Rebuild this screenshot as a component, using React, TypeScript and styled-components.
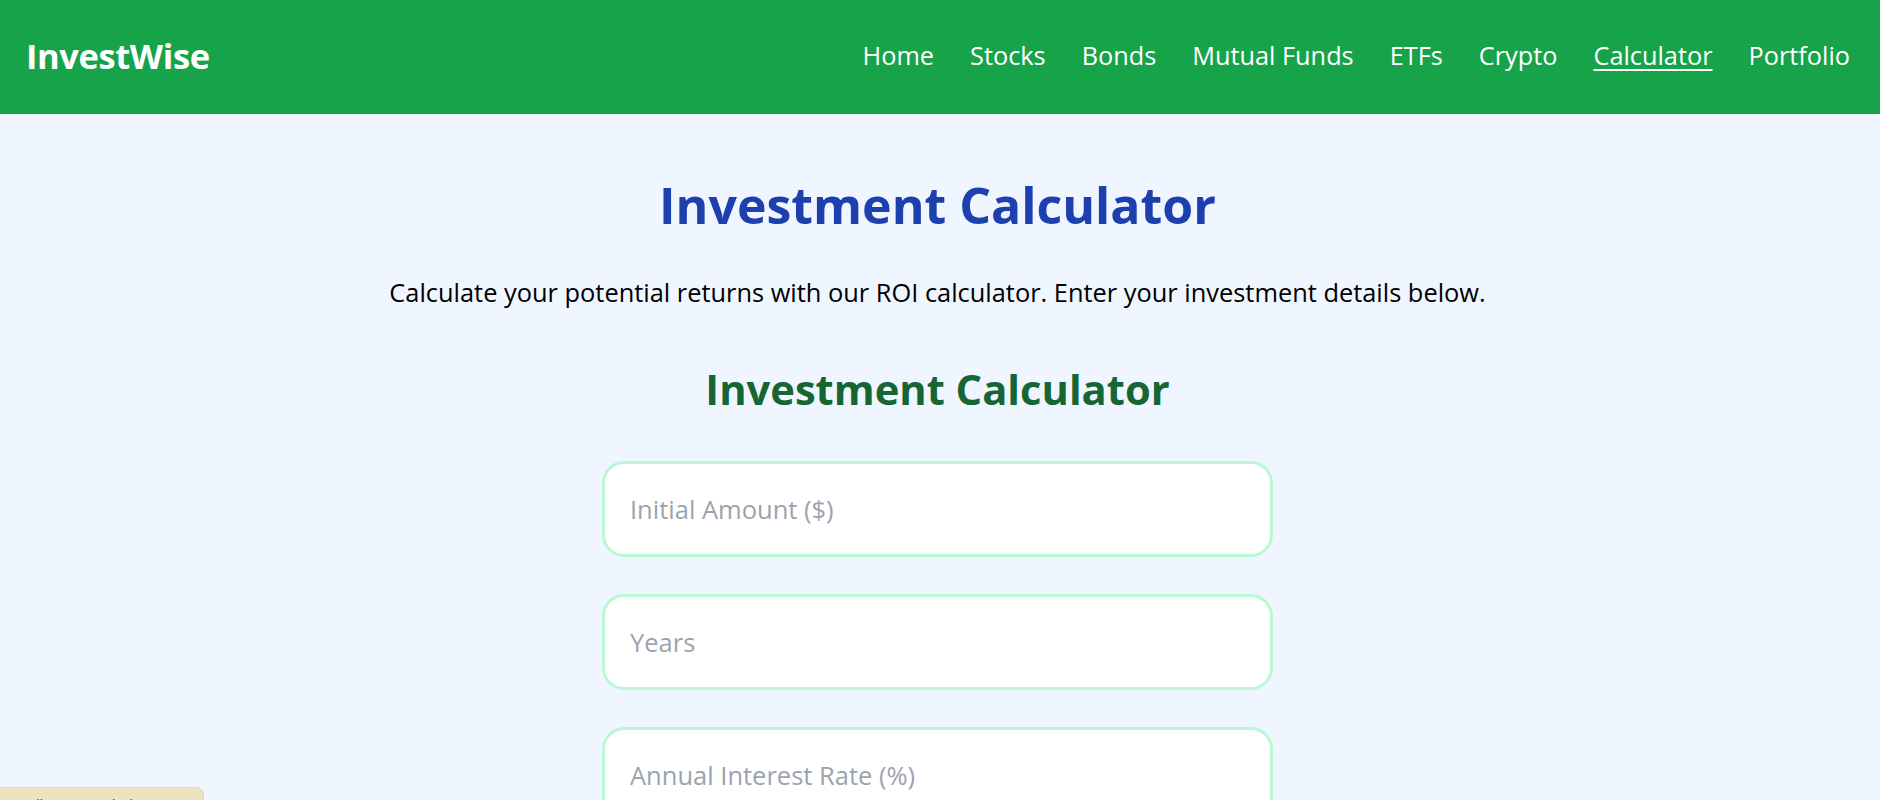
import React from "react";
import styled, { createGlobalStyle } from "styled-components";

const GlobalStyle = createGlobalStyle`
  html, body {
    margin: 0;
    padding: 0;
    overflow: hidden;
    background: #eff6ff;
    font-family: "Open Sans", "Noto Sans", "Liberation Sans", sans-serif;
  }
  * { box-sizing: border-box; }
`;

const Page = styled.div`
  min-height: 800px;
  background: #eff6ff;
`;

const Header = styled.header`
  height: 114px;
  background: #16a34a;
  display: flex;
  align-items: center;
  justify-content: space-between;
  padding: 0 30px 4px 26px;
`;

const Logo = styled.div`
  color: #ffffff;
  font-size: 34.5px;
  font-weight: 700;
  letter-spacing: -0.4px;
`;

const Nav = styled.nav`
  display: flex;
  align-items: center;
  gap: 36px;
`;

const NavLink = styled.a<{ $active?: boolean }>`
  color: #ffffff;
  font-size: 25.3px;
  text-decoration: ${(p) => (p.$active ? "underline" : "none")};
  text-underline-offset: 4px;
  text-decoration-thickness: 2px;
  cursor: pointer;
`;

const Main = styled.main`
  display: flex;
  flex-direction: column;
  align-items: center;
  text-align: center;
  padding: 61px 5px 0 0;
`;

const Title = styled.h1`
  margin: 0;
  font-size: 50px;
  line-height: 60px;
  font-weight: 700;
  color: #1e40af;
`;

const Subtitle = styled.p`
  margin: 39px 0 0;
  font-size: 25.4px;
  line-height: 36px;
  color: #000000;
`;

const SectionTitle = styled.h2`
  margin: 53px 0 0;
  font-size: 41.7px;
  line-height: 52px;
  font-weight: 700;
  color: #166534;
`;

const Form = styled.form`
  margin-top: 46px;
  width: 671px;
  display: flex;
  flex-direction: column;
  gap: 37px;
`;

const Field = styled.input`
  width: 100%;
  height: 96px;
  padding: 0 25px;
  border: 3px solid #bbf7d0;
  border-radius: 22px;
  background: #ffffff;
  font-family: inherit;
  font-size: 25.5px;
  color: #111827;
  outline: none;
  &::placeholder {
    color: #9ca3af;
  }
`;

const DevBadge = styled.div`
  position: fixed;
  left: 0;
  top: 787px;
  width: 204px;
  height: 40px;
  padding: 8px 10px;
  background: #ebe3c0;
  border-top: 1px solid #d9d6cc;
  border-right: 1px solid #d9d6cc;
  border-top-right-radius: 8px;
  font-size: 13px;
  line-height: 16px;
  color: #1f2937;
  text-align: left;
  white-space: nowrap;
  overflow: hidden;
`;

const links = ["Home", "Stocks", "Bonds", "Mutual Funds", "ETFs", "Crypto", "Calculator", "Portfolio"];

export default function App() {
  return (
    <Page>
      <GlobalStyle />
      <Header>
        <Logo>InvestWise</Logo>
        <Nav>
          {links.map((l) => (
            <NavLink key={l} $active={l === "Calculator"}>
              {l}
            </NavLink>
          ))}
        </Nav>
      </Header>
      <Main>
        <Title>Investment Calculator</Title>
        <Subtitle>
          Calculate your potential returns with our ROI calculator. Enter your investment details below.
        </Subtitle>
        <SectionTitle>Investment Calculator</SectionTitle>
        <Form onSubmit={(e) => e.preventDefault()}>
          <Field type="number" placeholder="Initial Amount ($)" />
          <Field type="number" placeholder="Years" />
          <Field type="number" placeholder="Annual Interest Rate (%)" />
        </Form>
      </Main>
      <DevBadge>Scroll at 2000 (calculator)</DevBadge>
    </Page>
  );
}
